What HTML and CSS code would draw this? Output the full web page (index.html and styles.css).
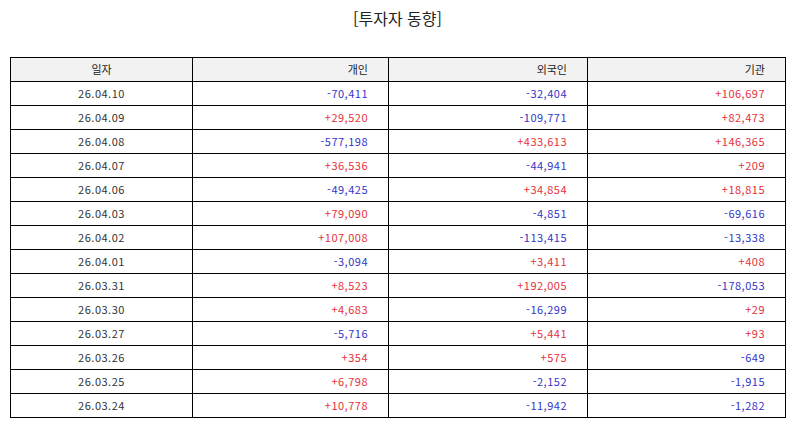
FILE: index.html
```html
<!DOCTYPE html>
<html lang="ko">
<head>
<meta charset="utf-8">
<title>투자자 동향</title>
<link rel="stylesheet" href="styles.css">
</head>
<body>
<h1 class="title">[투자자 동향]</h1>
<table class="grid">
  <colgroup>
    <col class="c-date">
    <col class="c-ind">
    <col class="c-for">
    <col class="c-ins">
  </colgroup>
  <thead>
    <tr><th class="center">일자</th><th>개인</th><th>외국인</th><th>기관</th></tr>
  </thead>
  <tbody>
    <tr><td class="center">26.04.10</td><td class="dn">-70,411</td><td class="dn">-32,404</td><td class="up">+106,697</td></tr>
    <tr><td class="center">26.04.09</td><td class="up">+29,520</td><td class="dn">-109,771</td><td class="up">+82,473</td></tr>
    <tr><td class="center">26.04.08</td><td class="dn">-577,198</td><td class="up">+433,613</td><td class="up">+146,365</td></tr>
    <tr><td class="center">26.04.07</td><td class="up">+36,536</td><td class="dn">-44,941</td><td class="up">+209</td></tr>
    <tr><td class="center">26.04.06</td><td class="dn">-49,425</td><td class="up">+34,854</td><td class="up">+18,815</td></tr>
    <tr><td class="center">26.04.03</td><td class="up">+79,090</td><td class="dn">-4,851</td><td class="dn">-69,616</td></tr>
    <tr><td class="center">26.04.02</td><td class="up">+107,008</td><td class="dn">-113,415</td><td class="dn">-13,338</td></tr>
    <tr><td class="center">26.04.01</td><td class="dn">-3,094</td><td class="up">+3,411</td><td class="up">+408</td></tr>
    <tr><td class="center">26.03.31</td><td class="up">+8,523</td><td class="up">+192,005</td><td class="dn">-178,053</td></tr>
    <tr><td class="center">26.03.30</td><td class="up">+4,683</td><td class="dn">-16,299</td><td class="up">+29</td></tr>
    <tr><td class="center">26.03.27</td><td class="dn">-5,716</td><td class="up">+5,441</td><td class="up">+93</td></tr>
    <tr><td class="center">26.03.26</td><td class="up">+354</td><td class="up">+575</td><td class="dn">-649</td></tr>
    <tr><td class="center">26.03.25</td><td class="up">+6,798</td><td class="dn">-2,152</td><td class="dn">-1,915</td></tr>
    <tr><td class="center">26.03.24</td><td class="up">+10,778</td><td class="dn">-11,942</td><td class="dn">-1,282</td></tr>
  </tbody>
</table>
</body>
</html>
```

FILE: styles.css
```css
html, body {
  margin: 0;
  padding: 0;
  background: #ffffff;
}

body {
  font-family: "Noto Sans CJK KR", "Noto Sans", sans-serif;
  color: #333333;
  padding: 0 10px;
}

.title {
  margin: 8px 0 0 0;
  font-size: 16px;
  line-height: 20px;
  font-weight: 400;
  text-align: center;
  color: #222222;
}

.grid {
  margin-top: 29px;
  width: 775px;
  border-collapse: collapse;
  table-layout: fixed;
  font-size: 11px;
  letter-spacing: 0.5px;
}

.c-date { width: 182px; }
.c-ind { width: 196px; }
.c-for { width: 199px; }
.c-ins { width: 198px; }

.grid th,
.grid td {
  border: 1px solid #000000;
  height: 23px;
  padding: 0 20px 0 0;
  line-height: 23px;
  text-align: right;
  font-weight: 400;
  white-space: nowrap;
}

.grid th {
  background: #f2f2f2;
  color: #222222;
  letter-spacing: 0;
}

.grid .center {
  text-align: center;
  padding: 0;
}

.up { color: #e5303c; }
.dn { color: #3434c8; }
```
